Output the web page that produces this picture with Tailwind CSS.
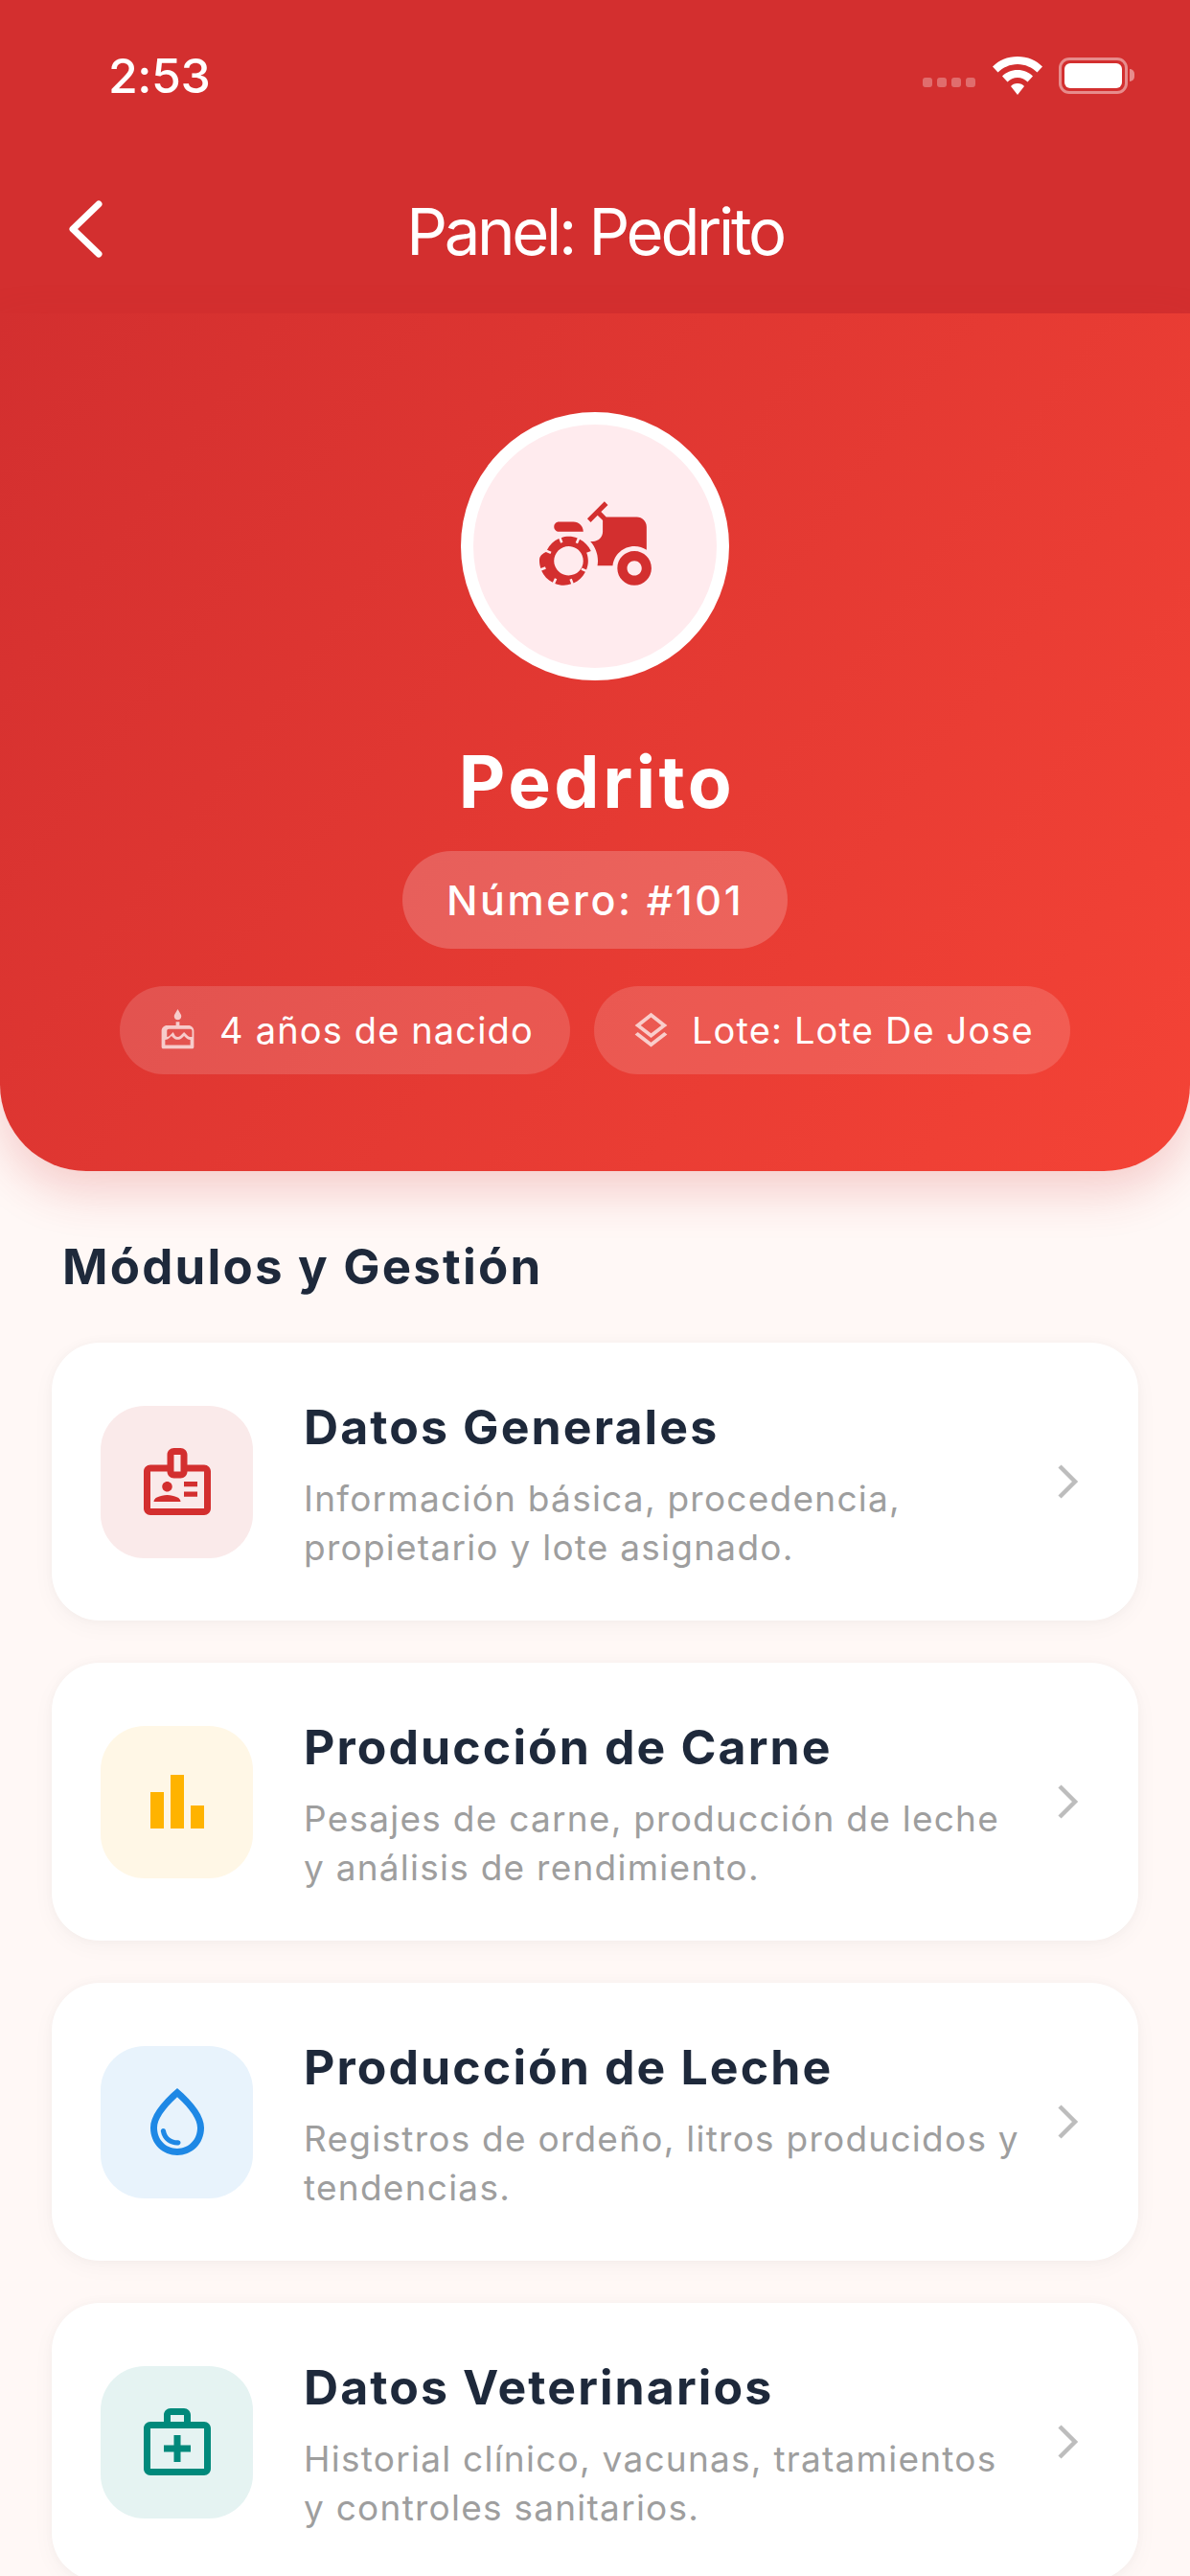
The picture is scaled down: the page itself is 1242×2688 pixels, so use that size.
<!DOCTYPE html>
<html lang="es">
<head>
  <meta charset="UTF-8" />
  <meta name="viewport" content="width=device-width, initial-scale=1.0"/>
  <title>Panel: Pedrito</title>
  <script src="https://cdn.jsdelivr.net/npm/@tailwindcss/browser@4"></script>
</head>
<body class="bg-[#fff8f6] font-['Inter',sans-serif]">
  <div class="w-[1242px] h-[2688px] overflow-hidden flex flex-col bg-[#fff8f6]">

    <!-- Top bar -->
    <header class="h-[327px] shrink-0 bg-[#d32f2f] text-white">
      <div class="h-[157px] pl-[113px] pr-[58px] flex justify-between items-center">
        <span class="text-[50px] font-medium leading-none tracking-[-0.5px]">2:53</span>
        <div class="flex items-center">
          <div class="flex gap-[5px] mt-[14px] mr-[17px]">
            <span class="w-[10px] h-[10px] rounded-[3px] bg-white/30"></span>
            <span class="w-[10px] h-[10px] rounded-[3px] bg-white/30"></span>
            <span class="w-[10px] h-[10px] rounded-[3px] bg-white/30"></span>
            <span class="w-[10px] h-[10px] rounded-[3px] bg-white/30"></span>
          </div>
          <svg width="54" height="40" viewBox="0 0 54 40" fill="#fff" class="mr-[16px]">
            <path d="M27 0C16.500 0 7.500 4 1 10.500l5.500 6C11.700 11.500 19 8 27 8s15.300 3.500 20.500 8.500l5.500-6C46.500 4 37.500 0 27 0z"/>
            <path d="M27 14c-6.500 0-12 2.500-16 6.500l5.500 6C19 24 23 22 27 22s8 2 10.500 4.500l5.500-6c-4-4-9.500-6.500-16-6.500z"/>
            <path d="M27 28c-3 0-5.500 1-7 3l7 9 7-9c-1.500-2-4-3-7-3z"/>
          </svg>
          <div class="w-[72px] h-[38px] rounded-[11px] border-[3px] border-white/45 p-[3px]">
            <div class="w-full h-full rounded-[6px] bg-white"></div>
          </div>
          <div class="w-[5px] h-[13px] ml-[2px] rounded-r-full bg-white/45"></div>
        </div>
      </div>
      <div class="relative h-[170px] flex items-start justify-center pt-[45px]">
        <svg width="40" height="64" viewBox="0 0 40 64" fill="none" stroke="#fff" stroke-width="7" stroke-linecap="round" stroke-linejoin="round" class="absolute left-[69px] top-[50px]">
          <path d="M34 6 L7 32 L34 58"/>
        </svg>
        <h2 class="text-[67px] leading-[80px] font-normal tracking-[-3.300px]">Panel: Pedrito</h2>
      </div>
    </header>

    <!-- Hero -->
    <section class="h-[895px] shrink-0 rounded-b-[90px] bg-[linear-gradient(126deg,#d32f2f,#f44336)] shadow-[0_20px_50px_rgba(211,47,47,0.22)] flex flex-col items-center pt-[103px] text-white">
      <div class="w-[280px] h-[280px] rounded-full border-[13px] border-white bg-[#ffebee] flex items-center justify-center">
        <svg width="122" height="122" viewBox="0 0 24 24" fill="#d32f2f" class="ml-[5px]">
          <path d="M19.500 12c.93 0 1.780.28 2.500.76V8c0-1.100-.9-2-2-2h-6.290l-1.060-1.060 1.410-1.410-.71-.71-3.530 3.530.71.71 1.410-1.410L13 6.710V9c0 1.100-.9 2-2 2h-.54c.95 1.060 1.540 2.460 1.540 4 0 .34-.04.67-.09 1h3.140c.25-2.250 2.140-4 4.450-4z"/>
          <path d="M19.500 13c-1.930 0-3.500 1.570-3.500 3.500s1.570 3.500 3.500 3.500 3.500-1.570 3.500-3.500-1.570-3.500-3.500-3.500zm0 5c-.83 0-1.500-.67-1.500-1.500s.67-1.500 1.500-1.500 1.500.67 1.500 1.500-.67 1.500-1.500 1.500z"/>
          <path d="M4 9h5c0-1.100-.9-2-2-2H4c-.55 0-1 .45-1 1s.45 1 1 1z"/>
          <path d="M9.830 13.820l-.18-.47.93-.35c-.46-1.060-1.280-1.910-2.310-2.430l-.4.89-.46-.21.4-.9C7.260 10.130 6.640 10 6 10c-.53 0-1.040.11-1.520.26l.34.91-.47.18L4 10.420c-1.060.46-1.910 1.280-2.430 2.310l.89.4-.21.46-.9-.4C.13 13.740 0 14.360 0 15c0 .53.11 1.040.26 1.520l.91-.34.18.47-.93.35c.46 1.060 1.280 1.910 2.310 2.430l.4-.89.46.21-.4.9c.55.22 1.170.35 1.810.35.53 0 1.040-.11 1.520-.26l-.34-.91.47-.18.35.93c1.060-.46 1.910-1.280 2.430-2.310l-.89-.4.21-.46.9.4c.22-.55.35-1.170.35-1.810 0-.53-.11-1.040-.26-1.520l-.91.34zm-2.680 3.950c-1.530.63-3.290-.09-3.920-1.620-.63-1.530.09-3.290 1.620-3.920 1.530-.63 3.290.09 3.920 1.620.63 1.530-.09 3.290-1.620 3.920z"/>
        </svg>
      </div>
      <h1 class="mt-[62px] pl-[4px] text-[75px] leading-[88px] font-bold tracking-[3.500px]">Pedrito</h1>
      <div class="mt-[28px] h-[102px] px-[46px] rounded-full bg-white/20 flex items-center text-[43px] font-medium tracking-[2.600px]">Número: #101</div>
      <div class="mt-[39px] flex gap-[25px]">
        <div class="h-[92px] pl-[38px] pr-[38px] rounded-full bg-white/15 flex items-center gap-[21px] text-[38px] tracking-[1.150px]">
          <svg width="45" height="45" viewBox="0 0 24 24" fill="#fff" fill-opacity="0.7"><path d="M12 6c1.110 0 2-.9 2-2 0-.38-.1-.73-.29-1.030L12 0l-1.710 2.970c-.19.3-.29.65-.29 1.030 0 1.100.9 2 2 2zm6 3h-5V7h-2v2H6c-1.660 0-3 1.340-3 3v9c0 .55.45 1 1 1h16c.55 0 1-.45 1-1v-9c0-1.660-1.340-3-3-3zm1 11H5v-3c.9-.01 1.760-.37 2.400-1.010l1.090-1.070 1.070 1.070c1.310 1.310 3.590 1.300 4.890 0l1.080-1.070 1.070 1.070c.64.64 1.500 1 2.400 1.010v3zm0-4.500c-.51-.01-.99-.2-1.350-.57l-2.130-2.130-2.140 2.130c-.74.74-2.030.74-2.770 0L9.480 12.800l-2.140 2.130c-.35.36-.83.56-1.340.57V12c0-.55.45-1 1-1h12c.55 0 1 .45 1 1v3.500z"/></svg>
          <span>4 años de nacido</span>
        </div>
        <div class="h-[92px] pl-[37px] pr-[38px] rounded-full bg-white/15 flex items-center gap-[20px] text-[38px] tracking-[1.150px]">
          <svg width="45" height="45" viewBox="0 0 24 24" fill="#fff" fill-opacity="0.7"><path d="M11.990 18.540l-7.370-5.730L3 14.070l9 7 9-7-1.630-1.270zM12 16l7.360-5.730L21 9l-9-7-9 7 1.630 1.270L12 16zm0-11.470L17.740 9 12 13.470 6.260 9 12 4.530z"/></svg>
          <span>Lote: Lote De Jose</span>
        </div>
      </div>
    </section>

    <!-- Modules -->
    <main class="px-[54px] pt-[69px]">
      <h3 class="ml-[11px] text-[51px] leading-[62px] font-[650] tracking-[2.200px] text-[#1e293b]">Módulos y Gestión</h3>
      <div class="mt-[48px] flex flex-col gap-[44px]">

        <div class="h-[290px] shrink-0 rounded-[50px] bg-white shadow-[0_6px_24px_rgba(0,0,0,0.035),0_0_8px_2px_rgba(0,0,0,0.02)] flex items-center pl-[51px] pr-[60px]">
          <div class="w-[159px] h-[159px] shrink-0 rounded-[46px] bg-[#faeaea] flex items-center justify-center">
            <svg width="84" height="84" viewBox="0 0 24 24" fill="#d32f2f"><path d="M20 7h-5V4c0-1.100-.9-2-2-2h-2c-1.100 0-2 .9-2 2v3H4c-1.100 0-2 .9-2 2v11c0 1.100.9 2 2 2h16c1.100 0 2-.9 2-2V9c0-1.100-.9-2-2-2zM11 4h2v5h-2V4zm9 16H4V9h5c0 1.100.9 2 2 2h2c1.100 0 2-.9 2-2h5v11z"/><path d="M9 15c.83 0 1.500-.67 1.500-1.500S9.830 12 9 12s-1.500.67-1.500 1.500S8.170 15 9 15zM12.080 16.680c-.96-.42-2.040-.68-3.080-.68s-2.120.26-3.080.68c-.56.24-.92.79-.92 1.320h8c0-.53-.36-1.080-.92-1.320zM14 12h4v1.500h-4zM14 15h4v1.500h-4z"/></svg>
          </div>
          <div class="ml-[53px] mt-[7px] flex-1 min-w-0">
            <h4 class="text-[50px] leading-[60px] font-[650] tracking-[2.100px] text-[#1e293b]">Datos Generales</h4>
            <p class="mt-[19px] text-[37px] leading-[51px] tracking-[1.250px] text-[#9e9e9e]">Información básica, procedencia,<br>propietario y lote asignado.</p>
          </div>
          <svg width="30" height="42" viewBox="0 0 30 42" fill="none" stroke="#bdbdbd" stroke-width="4.500" class="shrink-0"><path d="M8 5 L24 21 L8 37"/></svg>
        </div>

        <div class="h-[290px] shrink-0 rounded-[50px] bg-white shadow-[0_6px_24px_rgba(0,0,0,0.035),0_0_8px_2px_rgba(0,0,0,0.02)] flex items-center pl-[51px] pr-[60px]">
          <div class="w-[159px] h-[159px] shrink-0 rounded-[46px] bg-[#fff7e6] flex items-center justify-center">
            <svg width="96" height="96" viewBox="0 0 24 24" fill="#ffb300"><path d="M5 9.500h3.500V19H5zM10.250 5h3.500v14h-3.500zM15.500 13H19v6h-3.500z"/></svg>
          </div>
          <div class="ml-[53px] mt-[7px] flex-1 min-w-0">
            <h4 class="text-[50px] leading-[60px] font-[650] tracking-[2.100px] text-[#1e293b]">Producción de Carne</h4>
            <p class="mt-[19px] text-[37px] leading-[51px] tracking-[1.250px] text-[#9e9e9e]">Pesajes de carne, producción de leche<br>y análisis de rendimiento.</p>
          </div>
          <svg width="30" height="42" viewBox="0 0 30 42" fill="none" stroke="#bdbdbd" stroke-width="4.500" class="shrink-0"><path d="M8 5 L24 21 L8 37"/></svg>
        </div>

        <div class="h-[290px] shrink-0 rounded-[50px] bg-white shadow-[0_6px_24px_rgba(0,0,0,0.035),0_0_8px_2px_rgba(0,0,0,0.02)] flex items-center pl-[51px] pr-[60px]">
          <div class="w-[159px] h-[159px] shrink-0 rounded-[46px] bg-[#e8f3fc] flex items-center justify-center">
            <svg width="84" height="84" viewBox="0 0 24 24" fill="#1e88e5"><path d="M12 2c-5.330 4.550-8 8.480-8 11.800 0 4.980 3.800 8.200 8 8.200s8-3.220 8-8.200c0-3.320-2.670-7.250-8-11.800zm0 18c-3.350 0-6-2.570-6-6.200 0-2.340 1.950-5.440 6-9.140 4.050 3.700 6 6.790 6 9.140 0 3.630-2.650 6.200-6 6.200zm-4.170-6c.37 0 .67.26.74.62.41 2.220 2.280 2.980 3.640 2.870.43-.02.79.32.79.75 0 .4-.32.73-.72.75-2.130.13-4.620-1.090-5.190-4.120-.08-.45.28-.87.74-.87z"/></svg>
          </div>
          <div class="ml-[53px] mt-[7px] flex-1 min-w-0">
            <h4 class="text-[50px] leading-[60px] font-[650] tracking-[2.100px] text-[#1e293b]">Producción de Leche</h4>
            <p class="mt-[19px] text-[37px] leading-[51px] tracking-[1.250px] text-[#9e9e9e]">Registros de ordeño, litros producidos y<br>tendencias.</p>
          </div>
          <svg width="30" height="42" viewBox="0 0 30 42" fill="none" stroke="#bdbdbd" stroke-width="4.500" class="shrink-0"><path d="M8 5 L24 21 L8 37"/></svg>
        </div>

        <div class="h-[290px] shrink-0 rounded-[50px] bg-white shadow-[0_6px_24px_rgba(0,0,0,0.035),0_0_8px_2px_rgba(0,0,0,0.02)] flex items-center pl-[51px] pr-[60px]">
          <div class="w-[159px] h-[159px] shrink-0 rounded-[46px] bg-[#e5f3f2] flex items-center justify-center">
            <svg width="84" height="84" viewBox="0 0 24 24" fill="#00897b"><path d="M20 6h-4V4c0-1.100-.9-2-2-2h-4c-1.100 0-2 .9-2 2v2H4c-1.100 0-2 .9-2 2v12c0 1.100.9 2 2 2h16c1.100 0 2-.9 2-2V8c0-1.100-.9-2-2-2zM10 4h4v2h-4V4zm10 16H4V8h16v12z"/><path d="M13 10h-2v3H8v2h3v3h2v-3h3v-2h-3z"/></svg>
          </div>
          <div class="ml-[53px] mt-[7px] flex-1 min-w-0">
            <h4 class="text-[50px] leading-[60px] font-[650] tracking-[2.100px] text-[#1e293b]">Datos Veterinarios</h4>
            <p class="mt-[19px] text-[37px] leading-[51px] tracking-[1.250px] text-[#9e9e9e]">Historial clínico, vacunas, tratamientos<br>y controles sanitarios.</p>
          </div>
          <svg width="30" height="42" viewBox="0 0 30 42" fill="none" stroke="#bdbdbd" stroke-width="4.500" class="shrink-0"><path d="M8 5 L24 21 L8 37"/></svg>
        </div>

      </div>
    </main>
  </div>
</body>
</html>
